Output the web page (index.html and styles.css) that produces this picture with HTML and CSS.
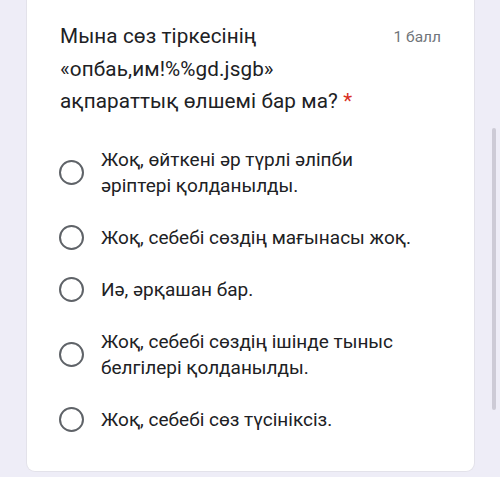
FILE: index.html
```html
<!DOCTYPE html>
<html lang="kk">
<head>
<meta charset="utf-8">
<link rel="stylesheet" href="styles.css">
</head>
<body>
<div class="page">
  <div class="card">
    <div class="header">
      <div class="title">Мына сөз тіркесінің «опбаь,им!%%gd.jsgb» ақпараттық өлшемі бар ма? <span class="req">*</span></div>
      <div class="points">1 балл</div>
    </div>
    <div class="options">
      <div class="option"><span class="radio"></span><span class="label">Жоқ, өйткені әр түрлі әліпби әріптері қолданылды.</span></div>
      <div class="option"><span class="radio"></span><span class="label">Жоқ, себебі сөздің мағынасы жоқ.</span></div>
      <div class="option"><span class="radio"></span><span class="label">Иә, әрқашан бар.</span></div>
      <div class="option"><span class="radio"></span><span class="label">Жоқ, себебі сөздің ішінде тыныс белгілері қолданылды.</span></div>
      <div class="option"><span class="radio"></span><span class="label">Жоқ, себебі сөз түсініксіз.</span></div>
    </div>
  </div>
  <div class="scrollbar"></div>
</div>
</body>
</html>
```
FILE: styles.css
```css
html, body {
  margin: 0;
  padding: 0;
}
body {
  background: #eeedf7;
  width: 500px;
  height: 477px;
  overflow: hidden;
  font-family: Roboto, "Liberation Sans", Arial, sans-serif;
  color: #202124;
}
.page {
  position: relative;
  width: 500px;
  height: 477px;
}
.card {
  margin-left: 26px;
  width: 449px;
  height: 472px;
  background: #ffffff;
  border: 1px solid #e3e2ea;
  border-top: none;
  border-radius: 0 0 9px 9px;
  padding: 0 33px;
  box-sizing: border-box;
}
.header {
  display: flex;
  justify-content: space-between;
  align-items: flex-start;
  padding-top: 20px;
}
.title {
  width: 310px;
  font-size: 20.7px;
  line-height: 32.5px;
  letter-spacing: 0.1px;
}
.req {
  color: #d93025;
}
.points {
  font-size: 15.5px;
  line-height: 20px;
  color: #70757a;
  padding-top: 7px;
}
.options {
  display: flex;
  flex-direction: column;
  gap: 26px;
  padding-top: 29px;
}
.option {
  display: flex;
  align-items: center;
}
.radio {
  flex: none;
  width: 21px;
  height: 21px;
  border: 2.5px solid #5f6368;
  border-radius: 50%;
  margin-left: -1px;
  margin-right: 17px;
}
.label {
  width: 315px;
  font-size: 19px;
  line-height: 26px;
}
.scrollbar {
  position: absolute;
  left: 492px;
  top: 128px;
  width: 4px;
  height: 282px;
  background: #cdcbd6;
  border-radius: 2px;
}
```
